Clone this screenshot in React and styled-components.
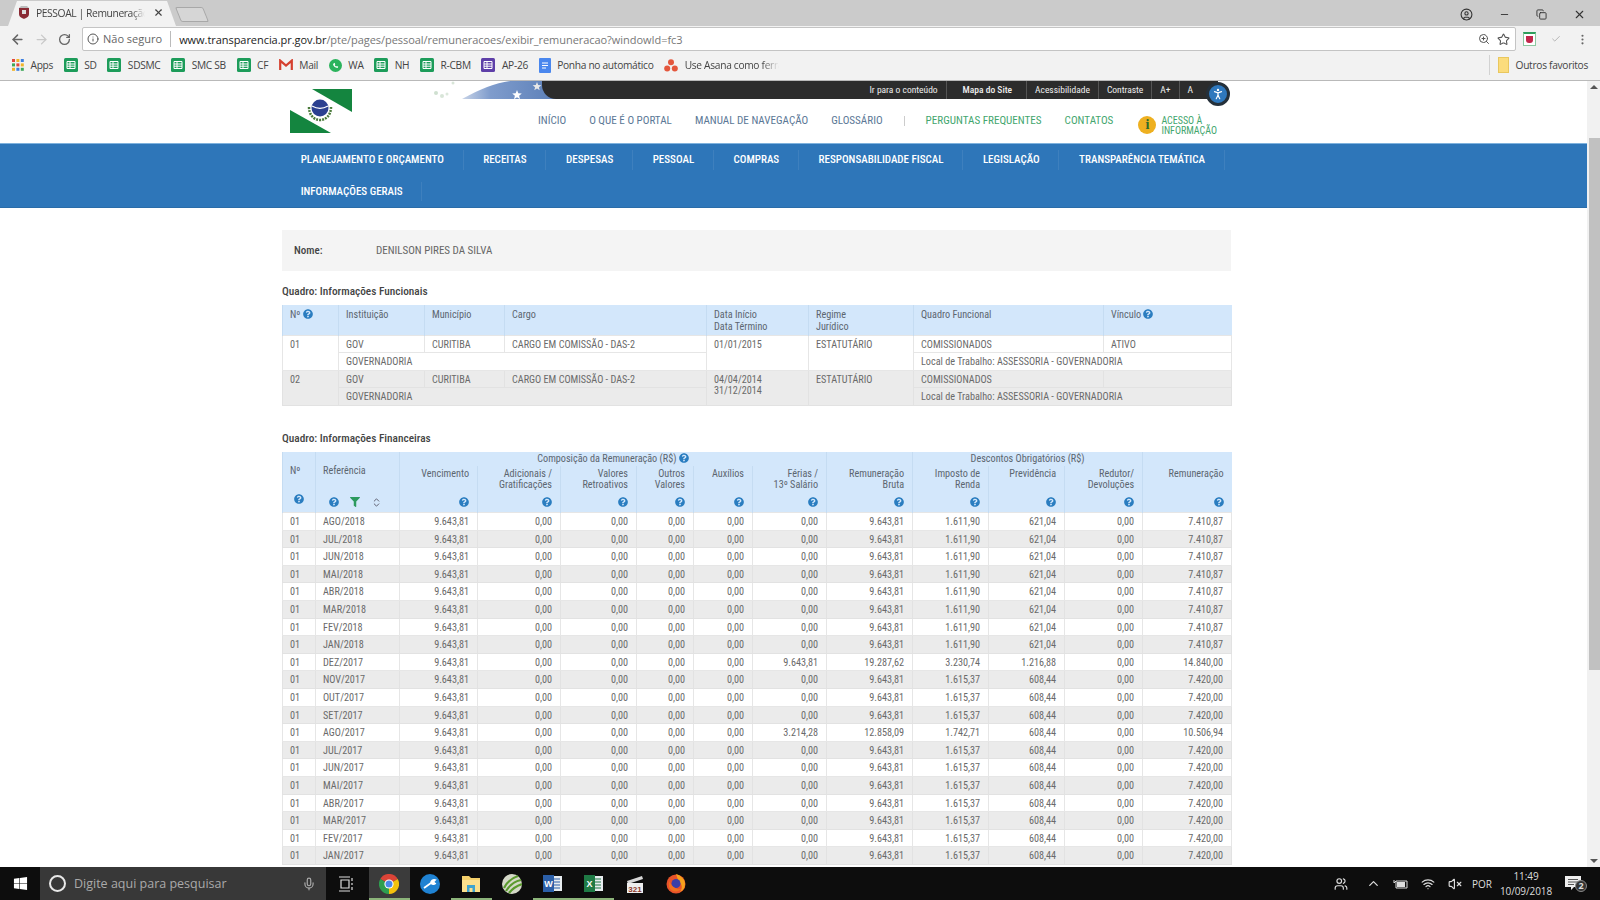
import React from 'react';
import styled, { createGlobalStyle } from 'styled-components';
import {
  ArrowLeft, ArrowRight, RotateCw, Info, ZoomIn, Star, X, Minus, Copy, CircleUser, MoreVertical, Check,
  ChevronsUpDown, ChevronUp, Mic, Users, Wifi, VolumeX, PersonStanding,
} from 'lucide-react';
import { FaQuestionCircle, FaFilter, FaWindows } from 'react-icons/fa';

const narrow = `Roboto, sans-serif`;
const ui = `"Open Sans", "Noto Sans", sans-serif`;
// picks the condensed face of Roboto
const squeeze = `font-stretch: 75%;`;

const GlobalStyle = createGlobalStyle`
  html, body { margin: 0; padding: 0; height: 100%; overflow: hidden; background: #fff; }
  * { box-sizing: border-box; }
`;

const Screen = styled.div`
  width: 1600px;
  height: 900px;
  display: flex;
  flex-direction: column;
  overflow: hidden;
`;

/* browser chrome */
const TabStrip = styled.div`
  height: 26px;
  background: #cbcbcb;
  display: flex;
  align-items: flex-end;
  padding-left: 8px;
  position: relative;
`;

const Tab = styled.div`
  width: 168px;
  height: 25px;
  background: #f2f2f2;
  clip-path: polygon(0 100%, 9px 0, 159px 0, 100% 100%);
  display: flex;
  align-items: center;
  padding: 0 12px 2px 10px;
  font: 10.3px ${ui};
  letter-spacing: -0.4px;
  color: #444;
`;

const TabTitle = styled.span`
  flex: 1;
  overflow: hidden;
  white-space: nowrap;
  margin: 0 8px 0 6px;
  -webkit-mask-image: linear-gradient(90deg, #000 88%, transparent);
  mask-image: linear-gradient(90deg, #000 88%, transparent);
`;

const NewTab = styled.div`
  width: 28px;
  height: 15px;
  margin-bottom: 4px;
  background: #d6d6d6;
  border: 1px solid #a8a8a8;
  border-radius: 2px;
  transform: skewX(22deg);
  margin-left: 2px;
`;

const WindowButtons = styled.div`
  margin-left: auto;
  height: 24px;
  display: flex;
  align-items: center;
  gap: 26px;
  padding-right: 14px;
  color: #333;
`;

const Toolbar = styled.div`
  height: 26px;
  background: #f2f2f2;
  display: flex;
  align-items: center;
  padding-left: 10px;
  color: #666;
`;

const NavIcons = styled.div`
  width: 72px;
  display: flex;
  align-items: center;
  gap: 9px;
`;

const Omnibox = styled.div`
  width: 1434px;
  height: 24px;
  background: #fff;
  border: 1px solid #c4c4c4;
  border-radius: 2px;
  display: flex;
  align-items: center;
  padding: 0 5px 0 4px;
  font: 11px ${ui};
  color: #666;
`;

const Secure = styled.span`
  margin-left: 4px;
  padding-right: 8px;
  border-right: 1px solid #bbb;
  line-height: 16px;
`;

const Url = styled.span`
  margin-left: 8px;
  color: #777;
  letter-spacing: -0.05px;
  b { font-weight: 400; color: #222; }
`;

const OmniIcons = styled.div`
  margin-left: auto;
  display: flex;
  gap: 7px;
  align-items: center;
  color: #555;
`;

const ExtIcons = styled.div`
  flex: 1;
  display: flex;
  align-items: center;
  gap: 15px;
  padding-left: 7px;
`;

const ExtBadge = styled.div`
  width: 13px;
  height: 14px;
  border: 1px solid #8cc9a0;
  border-top: 2px solid #2f9e5c;
  display: flex;
  align-items: center;
  justify-content: center;
  background: #fff;
  &::after { content: ''; width: 7px; height: 7px; border-radius: 0 0 3px 3px; background: #c2264b; }
`;

const Bookmarks = styled.div`
  height: 29px;
  background: #f2f2f2;
  border-bottom: 1px solid #b9b9b9;
  display: flex;
  align-items: center;
  padding: 0 0 2px 12px;
  font: 10.2px ${ui};
  letter-spacing: -0.3px;
  color: #444;
`;

const Bookmark = styled.div`
  display: flex;
  align-items: center;
  gap: 6.5px;
  margin-right: 10.7px;
  white-space: nowrap;
`;

const FadeLabel = styled.span`
  width: 94px;
  overflow: hidden;
  -webkit-mask-image: linear-gradient(90deg, #000 82%, transparent);
  mask-image: linear-gradient(90deg, #000 82%, transparent);
`;

const OtherFavs = styled.div`
  margin-left: auto;
  height: 20px;
  border-left: 1px solid #d2d2d2;
  padding: 0 12px 0 8px;
  display: flex;
  align-items: center;
  gap: 7px;
`;

const Folder = styled.div`
  width: 11px;
  height: 16px;
  background: #fbdc7c;
  border: 1px solid #e9c75e;
`;

/* page */
const Viewport = styled.div`
  flex: 1;
  min-height: 0;
  display: flex;
  background: #fff;
`;

const Page = styled.div`
  width: 1587px;
  overflow: hidden;
`;

const Scrollbar = styled.div`
  width: 13px;
  background: #f1f1f1;
  display: flex;
  flex-direction: column;
  align-items: center;
  justify-content: space-between;
  padding-top: 4px;
  position: relative;
`;

const Thumb = styled.div`
  position: absolute;
  top: 57px;
  left: 2px;
  right: 0;
  height: 532px;
  background: #c1c1c1;
`;

const Arrow = styled.div`
  width: 0;
  height: 0;
  border-left: 4px solid transparent;
  border-right: 4px solid transparent;
  ${p => p.$down ? 'border-top: 4px solid #555; margin-bottom: 4px;' : 'border-bottom: 4px solid #555;'}
`;

const Header = styled.div`
  height: 62px;
  display: flex;
  padding-left: 290px;
`;

const Logo = styled.svg`
  width: 62px;
  height: 45px;
  margin-top: 8px;
  flex: none;
`;

const HeaderRight = styled.div`
  margin-left: 48px;
  width: 828px;
`;

const TopStrip = styled.div`
  height: 18px;
  display: flex;
  position: relative;
`;

const FlagArt = styled.svg`
  width: 157px;
  height: 18px;
  flex: none;
`;

const DarkBar = styled.div`
  flex: 1;
  margin-left: -15px;
  background: #2c2c2c;
  border-radius: 0 0 0 14px;
  display: flex;
  justify-content: flex-end;
  align-items: center;
  height: 18px;
  margin-right: 10px;
  padding-right: 17px;
  font: 9.5px ${narrow};
  ${squeeze}
  color: #eee;
`;

const BarLink = styled.span`
  padding: 0 ${p => (p.$wide ? '14px 0 16px' : '8px')};
  line-height: 18px;
  font-weight: ${p => (p.$wide ? 500 : 400)};
  border-left: 1px solid ${p => (p.$first ? 'transparent' : '#555')};
`;

const A11yButton = styled.div`
  position: absolute;
  right: -2px;
  top: 1px;
  width: 24px;
  height: 24px;
  border-radius: 50%;
  background: #2f78bd;
  border: 3px solid #25303a;
  color: #fff;
  display: flex;
  align-items: center;
  justify-content: center;
`;

const LinkRow = styled.div`
  display: flex;
  align-items: flex-start;
  padding: 14px 0 0 138px;
  gap: 23px;
  font: 11.1px/15px ${narrow};
  ${squeeze}
  text-transform: uppercase;
`;

const TopLink = styled.span`
  color: ${p => (p.$green ? '#43a66e' : '#5b7896')};
  white-space: nowrap;
`;

const LinkDivider = styled.span`
  width: 1px;
  height: 10px;
  margin: 3px -2px 0;
  background: #ccc;
`;

const Acesso = styled.div`
  display: flex;
  gap: 5px;
  margin-left: 2px;
  color: #43a66e;
  font-size: 10px;
  line-height: 10px;
  padding-top: 3px;
`;

const AcessoIcon = styled.div`
  width: 18px;
  height: 18px;
  border-radius: 50%;
  background: #eeb020;
  color: #2c6a2c;
  font: bold 14px/18px "Liberation Serif", serif;
  text-transform: none;
  text-align: center;
`;

const MainNav = styled.div`
  height: 65px;
  background: #2e76b9;
  border-top: 1px solid #7fb2dd;
  border-bottom: 1px solid #2a6ca8;
  padding-left: 281px;
`;

const NavList = styled.div`
  width: 951px;
  display: flex;
  flex-wrap: wrap;
`;

const NavItem = styled.div`
  height: 31.5px;
  padding: 0 19.7px;
  font: 500 11px/31px ${narrow};
  ${squeeze}
  color: #fff;
  text-transform: uppercase;
  white-space: nowrap;
  position: relative;
  &::after {
    content: '';
    position: absolute;
    right: 0;
    top: 6px;
    bottom: 6px;
    width: 1px;
    background: rgba(255, 255, 255, 0.08);
  }
`;

const Content = styled.div`
  width: 949px;
  margin: 22px 0 0 282px;
`;

const NameBox = styled.div`
  height: 41px;
  background: #f4f4f4;
  display: flex;
  align-items: center;
  padding-left: 12px;
  font: 11px ${narrow};
  ${squeeze}
  color: #666;
`;

const NameLabel = styled.span`
  width: 82px;
  font-weight: 500;
  color: #444;
`;

const SectionTitle = styled.div`
  font: 500 11.3px/16px ${narrow};
  ${squeeze}
  color: #444;
  margin: ${p => p.$top}px 0 5px;
`;

const Table = styled.table`
  width: 949px;
  table-layout: fixed;
  border-collapse: collapse;
  font: 10.2px/11.6px ${narrow};
  ${squeeze}
  color: #6a6a6a;
`;

const Th = styled.th`
  background: #d3e7fb;
  font-weight: normal;
  color: #5c6670;
  vertical-align: top;
  text-align: ${p => p.$align || 'left'};
  padding: ${p => p.$pad || '4px 7px 0'};
  border-left: 1px solid #c5dcf2;
  white-space: nowrap;
`;

const Td = styled.td`
  vertical-align: top;
  padding: 3px 8px 0 7px;
  background: ${p => (p.$alt ? '#ebebeb' : '#fff')};
  border: 1px solid ${p => (p.$alt ? '#e2e2e2' : '#e6e6e6')};
  text-align: ${p => p.$align || 'left'};
  white-space: nowrap;
  overflow: hidden;
`;

const Help = styled(FaQuestionCircle)`
  color: #2a7dc0;
  width: 10px;
  height: 10px;
  vertical-align: -1px;
`;

const Tools = styled.div`
  display: flex;
  align-items: center;
  gap: 11px;
  padding-left: 13px;
`;

/* task bar */
const Taskbar = styled.div`
  height: 33px;
  background: #0d0d0d;
  display: flex;
  align-items: center;
  color: #ddd;
`;

const StartButton = styled.div`
  width: 40px;
  display: flex;
  justify-content: center;
`;

const SearchBox = styled.div`
  width: 286px;
  height: 33px;
  background: #383838;
  display: flex;
  align-items: center;
  padding: 0 10px 0 9px;
  font: 12.5px ${ui};
  color: #aaa;
`;

const Cortana = styled.div`
  width: 17px;
  height: 17px;
  border-radius: 50%;
  border: 2px solid #e8e8e8;
  margin-right: 8px;
`;

const TaskApps = styled.div`
  display: flex;
  height: 33px;
`;

const TaskApp = styled.div`
  width: ${p => p.$w || 40.9}px;
  margin-left: ${p => (p.$active ? 3 : 0)}px;
  display: flex;
  align-items: center;
  justify-content: center;
  background: ${p => (p.$active ? '#3b3b3b' : 'transparent')};
  box-shadow: ${p => (p.$open ? 'inset 0 -2px 0 #8cb47a' : 'none')};
`;

const Tray = styled.div`
  margin-left: auto;
  display: flex;
  align-items: center;
  height: 33px;
  font: 10px ${ui};
  color: #ddd;
`;

const TrayIcon = styled.div`
  width: 27px;
  margin-right: ${p => p.$gap || 0}px;
  display: flex;
  justify-content: center;
`;

const Lang = styled.span`
  width: 28px;
  text-align: center;
`;

const Clock = styled.div`
  width: 60px;
  text-align: center;
  line-height: 15px;
  letter-spacing: -0.1px;
`;

const Notify = styled.div`
  width: 44px;
  padding-left: 9px;
  display: flex;
  position: relative;
`;

const NotifyCount = styled.div`
  position: absolute;
  left: 19px;
  top: 4px;
  width: 12px;
  height: 12px;
  border-radius: 50%;
  background: #333;
  border: 1px solid #888;
  font: bold 9px/10px ${ui};
  text-align: center;
  color: #ddd;
`;

const SheetIcon = ({ color = '#1d9c5a' }) => (
  <svg width="14" height="14" viewBox="0 0 14 14">
    <rect width="14" height="14" rx="1.5" fill={color} />
    <path d="M3 3.5h8v7H3zM3 6h8M3 8.2h8M6 3.5v7" fill="none" stroke="#fff" strokeWidth="1" />
  </svg>
);

const AppsIcon = () => {
  const colors = ['#e3483b', '#f0b428', '#3c7fe0', '#3fa85a', '#e3483b', '#f0b428', '#f0b428', '#3c7fe0', '#3fa85a'];
  return (
    <svg width="12" height="12" viewBox="0 0 12 12">
      {colors.map((c, i) => (
        <rect key={i} x={(i % 3) * 4.4} y={Math.floor(i / 3) * 4.4} width="3" height="3" fill={c} />
      ))}
    </svg>
  );
};

const MailIcon = () => (
  <svg width="14" height="12" viewBox="0 0 14 12">
    <path d="M1.2 11V1.6L7 6.6l5.8-5V11" fill="none" stroke="#d5402f" strokeWidth="2.2" />
  </svg>
);

const WaIcon = () => (
  <svg width="13" height="13" viewBox="0 0 13 13">
    <circle cx="6.5" cy="6.5" r="6.5" fill="#2bb35c" />
    <path d="M4 5c.3 2 2 3.7 4.5 4l.8-1.3-1.4-.8-.7.6c-.7-.3-1.2-.9-1.5-1.6l.6-.7-.8-1.4z" fill="#fff" />
  </svg>
);

const DocIcon = () => (
  <svg width="12" height="15" viewBox="0 0 12 15">
    <rect width="12" height="15" rx="1" fill="#4a87ee" />
    <path d="M3 5h6M3 7.5h6M3 10h4" stroke="#fff" strokeWidth="1" />
  </svg>
);

const AsanaIcon = () => (
  <svg width="14" height="13" viewBox="0 0 14 13">
    <circle cx="7" cy="3.2" r="3" fill="#e4573d" />
    <circle cx="3.2" cy="9.6" r="3" fill="#e4573d" />
    <circle cx="10.8" cy="9.6" r="3" fill="#e4573d" />
  </svg>
);

const Crest = () => (
  <svg width="12" height="13" viewBox="0 0 12 13">
    <path d="M1 2h10v6c0 3-3 4-5 5-2-1-5-2-5-5z" fill="#8a2a34" />
    <path d="M1 2l2-2h6l2 2z" fill="#bbb" />
    <rect x="4" y="4" width="4" height="4" fill="#ddd" />
  </svg>
);

const ChromeIcon = () => (
  <svg width="20" height="20" viewBox="0 0 20 20">
    <path d="M10 10L1.3 5A10 10 0 0 1 18.7 5z" fill="#dc4437" />
    <path d="M10 10L18.7 5A10 10 0 0 1 10 20z" fill="#f4c20d" />
    <path d="M10 10L10 20A10 10 0 0 1 1.3 5z" fill="#2f9e50" />
    <circle cx="10" cy="10" r="4.6" fill="#fff" />
    <circle cx="10" cy="10" r="3.5" fill="#4a89e8" />
  </svg>
);

const WrenchIcon = () => (
  <svg width="20" height="20" viewBox="0 0 20 20">
    <circle cx="10" cy="10" r="10" fill="#1f82d2" />
    <path d="M4 14l7-5M11 9c0-2 2-3.500 4-3l-2 2 2 1.500c-1 1-3 .5-4-.5z" stroke="#fff" strokeWidth="1.800" fill="#fff" />
  </svg>
);

const ExplorerIcon = () => (
  <svg width="20" height="19" viewBox="0 0 20 19">
    <path d="M1 2h7l2 2h9v14H1z" fill="#f4d06b" />
    <path d="M1 6h18v12H1z" fill="#fbe08e" />
    <rect x="6" y="11" width="8" height="7" fill="#3fa4d0" />
    <rect x="8.500" y="14" width="3" height="4" fill="#fbe08e" />
  </svg>
);

const SwirlIcon = () => (
  <svg width="20" height="20" viewBox="0 0 20 20">
    <circle cx="10" cy="10" r="10" fill="#d5d9c8" />
    <path d="M2 14C5 8 10 4 16 2M4 17C8 11 13 7 19 6M7 19C10 15 14 12 20 10" stroke="#5a9a2d" strokeWidth="2.200" fill="none" />
  </svg>
);

const OfficeIcon = ({ color, letter }) => (
  <svg width="20" height="19" viewBox="0 0 20 19">
    <rect x="9" y="2" width="10" height="15" fill="#e8edf0" />
    <path d="M11 5h6M11 8h6M11 11h6M11 14h6" stroke={color} strokeWidth="1.200" />
    <rect x="0" y="1" width="11" height="17" fill={color} />
    <text x="5.500" y="13" fontSize="9" fontWeight="bold" textAnchor="middle" fill="#fff" fontFamily="Liberation Sans">{letter}</text>
  </svg>
);

const ClapperIcon = () => (
  <svg width="20" height="20" viewBox="0 0 20 20">
    <path d="M2 7L17 2l1 3L3 10z" fill="#d8d8d8" />
    <rect x="2" y="9" width="16" height="10" fill="#eee" />
    <text x="10" y="17.500" fontSize="8" fontWeight="bold" textAnchor="middle" fill="#8d3a2a" fontFamily="Liberation Sans">321</text>
  </svg>
);

const FirefoxIcon = () => (
  <svg width="20" height="21" viewBox="0 0 20 21">
    <circle cx="10" cy="11" r="9.500" fill="#e8532a" />
    <path d="M10 1c6 2 9 6 9 10a9 9 0 0 1-5 8c3-4 2-8-1-10-1-2-2-5-3-8z" fill="#f7a11c" />
    <circle cx="10" cy="10.500" r="4.500" fill="#3a3fa8" />
    <path d="M3 8c2 4 6 9 12 8-3 4-10 3-12-2z" fill="#f0711f" />
  </svg>
);

const Sort = styled(ChevronsUpDown)`
  width: 11px;
  height: 11px;
  color: #556;
`;

const Filter = styled(FaFilter)`
  width: 10px;
  height: 10px;
  color: #2c9a5e;
`;

const navItems = ['Planejamento e Orçamento', 'Receitas', 'Despesas', 'Pessoal', 'Compras', 'Responsabilidade Fiscal', 'Legislação', 'Transparência Temática', 'Informações Gerais'];

const finCols = [33, 84, 78, 83, 76, 57, 59, 74, 86, 76, 76, 78, 89];
const funCols = [56, 86, 80, 202, 102, 105, 190, 128];

const normal18 = ['0,00', '9.643,81', '1.611,90', '621,04', '0,00', '7.410,87'];
const normal17 = ['0,00', '9.643,81', '1.615,37', '608,44', '0,00', '7.420,00'];

const rows = [
  ...['AGO/2018', 'JUL/2018', 'JUN/2018', 'MAI/2018', 'ABR/2018', 'MAR/2018', 'FEV/2018', 'JAN/2018'].map(r => [r, ...normal18]),
  ['DEZ/2017', '9.643,81', '19.287,62', '3.230,74', '1.216,88', '0,00', '14.840,00'],
  ...['NOV/2017', 'OUT/2017', 'SET/2017'].map(r => [r, ...normal17]),
  ['AGO/2017', '3.214,28', '12.858,09', '1.742,71', '608,44', '0,00', '10.506,94'],
  ...['JUL/2017', 'JUN/2017', 'MAI/2017', 'ABR/2017', 'MAR/2017', 'FEV/2017', 'JAN/2017'].map(r => [r, ...normal17]),
];

const FunctionalTable = () => (
  <Table>
    <colgroup>{funCols.map((w, i) => <col key={i} width={w} />)}</colgroup>
    <thead>
      <tr style={{ height: 30 }}>
        <Th>Nº <Help /></Th>
        <Th>Instituição</Th>
        <Th>Município</Th>
        <Th>Cargo</Th>
        <Th>Data Início<br />Data Término</Th>
        <Th>Regime<br />Jurídico</Th>
        <Th>Quadro Funcional</Th>
        <Th>Vínculo <Help /></Th>
      </tr>
    </thead>
    <tbody>
      {[
        { n: '01', date: <>01/01/2015</>, vinculo: 'ATIVO' },
        { n: '02', date: <>04/04/2014<br />31/12/2014</>, vinculo: '', alt: true },
      ].map(r => (
        <React.Fragment key={r.n}>
          <tr style={{ height: 17.5 }}>
            <Td $alt={r.alt} rowSpan={2}>{r.n}</Td>
            <Td $alt={r.alt}>GOV</Td>
            <Td $alt={r.alt}>CURITIBA</Td>
            <Td $alt={r.alt}>CARGO EM COMISSÃO - DAS-2</Td>
            <Td $alt={r.alt} rowSpan={2}>{r.date}</Td>
            <Td $alt={r.alt} rowSpan={2}>ESTATUTÁRIO</Td>
            <Td $alt={r.alt}>COMISSIONADOS</Td>
            <Td $alt={r.alt}>{r.vinculo}</Td>
          </tr>
          <tr style={{ height: 17.5 }}>
            <Td $alt={r.alt} colSpan={3}>GOVERNADORIA</Td>
            <Td $alt={r.alt} colSpan={2}>Local de Trabalho: ASSESSORIA - GOVERNADORIA</Td>
          </tr>
        </React.Fragment>
      ))}
    </tbody>
  </Table>
);

const labels = [
  ['Vencimento'], ['Adicionais /', 'Gratificações'], ['Valores', 'Retroativos'], ['Outros', 'Valores'], ['Auxílios'],
  ['Férias /', '13º Salário'], ['Remuneração', 'Bruta'], ['Imposto de', 'Renda'], ['Previdência'], ['Redutor/', 'Devoluções'], ['Remuneração'],
];

const FinancialTable = () => (
  <Table>
    <colgroup>{finCols.map((w, i) => <col key={i} width={w} />)}</colgroup>
    <thead>
      <tr style={{ height: 14 }}>
        <Th rowSpan={2} $pad="13px 7px 0">Nº</Th>
        <Th rowSpan={2} $pad="13px 7px 0">Referência</Th>
        <Th colSpan={6} $align="center" $pad="1px 8px 0">Composição da Remuneração (R$) <Help /></Th>
        <Th />
        <Th colSpan={3} $align="center" $pad="1px 8px 0">Descontos Obrigatórios (R$)</Th>
        <Th />
      </tr>
      <tr style={{ height: 27 }}>
        {labels.map(l => (
          <Th key={l.join()} $align="right" $pad="2px 8px 0">{l[0]}{l[1] && <><br />{l[1]}</>}</Th>
        ))}
      </tr>
      <tr style={{ height: 20 }}>
        <Th $pad="1px 7px 0 11px"><Help /></Th>
        <Th $pad="4px 0 0"><Tools><Help /><Filter /><Sort /></Tools></Th>
        {labels.map(l => <Th key={l.join()} $align="right" $pad="4px 8px 0"><Help /></Th>)}
      </tr>
    </thead>
    <tbody>
      {rows.map((r, i) => (
        <tr key={i} style={{ height: 17.6 }}>
          <Td $alt={i % 2 === 1}>01</Td>
          <Td $alt={i % 2 === 1}>{r[0]}</Td>
          <Td $alt={i % 2 === 1} $align="right">9.643,81</Td>
          <Td $alt={i % 2 === 1} $align="right">0,00</Td>
          <Td $alt={i % 2 === 1} $align="right">0,00</Td>
          <Td $alt={i % 2 === 1} $align="right">0,00</Td>
          <Td $alt={i % 2 === 1} $align="right">0,00</Td>
          {r.slice(1).map((v, j) => <Td key={j} $alt={i % 2 === 1} $align="right">{v}</Td>)}
        </tr>
      ))}
    </tbody>
  </Table>
);

export default function App() {
  return (
    <Screen>
      <GlobalStyle />
      <TabStrip>
        <Tab>
          <Crest />
          <TabTitle>PESSOAL | Remuneração</TabTitle>
          <X size={11} strokeWidth={2.5} />
        </Tab>
        <NewTab />
        <WindowButtons>
          <CircleUser size={13} />
          <Minus size={11} />
          <Copy size={11} />
          <X size={13} />
        </WindowButtons>
      </TabStrip>
      <Toolbar>
        <NavIcons>
          <ArrowLeft size={15} strokeWidth={2.4} />
          <ArrowRight size={15} color="#c8c8c8" />
          <RotateCw size={13} strokeWidth={2.4} />
        </NavIcons>
        <Omnibox>
          <Info size={12} color="#555" />
          <Secure>Não seguro</Secure>
          <Url><b>www.transparencia.pr.gov.br</b>/pte/pages/pessoal/remuneracoes/exibir_remuneracao?windowId=fc3</Url>
          <OmniIcons>
            <ZoomIn size={12} />
            <Star size={13} />
          </OmniIcons>
        </Omnibox>
        <ExtIcons>
          <ExtBadge />
          <Check size={10} color="#aaa" />
          <MoreVertical size={13} />
        </ExtIcons>
      </Toolbar>
      <Bookmarks>
        <Bookmark><AppsIcon />Apps</Bookmark>
        {['SD', 'SDSMC', 'SMC SB', 'CF'].map(b => <Bookmark key={b}><SheetIcon />{b}</Bookmark>)}
        <Bookmark><MailIcon />Mail</Bookmark>
        <Bookmark><WaIcon />WA</Bookmark>
        <Bookmark><SheetIcon />NH</Bookmark>
        <Bookmark><SheetIcon />R-CBM</Bookmark>
        <Bookmark><SheetIcon color="#5e3fa8" />AP-26</Bookmark>
        <Bookmark><DocIcon />Ponha no automático</Bookmark>
        <Bookmark><AsanaIcon /><FadeLabel>Use Asana como ferramenta</FadeLabel></Bookmark>
        <OtherFavs><Folder />Outros favoritos</OtherFavs>
      </Bookmarks>

      <Viewport>
        <Page>
          <Header>
            <Logo viewBox="0 0 62 45">
              <path d="M22 0H62V23z" fill="#14853f" />
              <path d="M0 21L41 44H0z" fill="#14853f" />
              <circle cx="30" cy="19" r="8.500" fill="#2b3f90" />
              <path d="M19 18c0 8 5 13 11 13s11-5 11-13" fill="none" stroke="#4a7a3a" strokeWidth="2.500" strokeDasharray="2 1" />
              <path d="M22 17c5 3 11 3 16 0" stroke="#fff" strokeWidth="1.200" fill="none" />
            </Logo>
            <HeaderRight>
              <TopStrip>
                <FlagArt viewBox="0 0 157 18">
                  <defs>
                    <linearGradient id="flagFade" x1="0" x2="1" y1="0" y2="0">
                      <stop offset="0" stopColor="#c8d4e8" />
                      <stop offset="0.3" stopColor="#7f9ccc" />
                      <stop offset="1" stopColor="#5b7fb8" />
                    </linearGradient>
                  </defs>
                  <path d="M62 18C80 8 95 2 110 0H157V18z" fill="url(#flagFade)" />
                  <circle cx="36" cy="12" r="2" fill="#cfe0d0" />
                  <circle cx="42" cy="15" r="2" fill="#d8e5d8" />
                  <circle cx="47" cy="13" r="1.500" fill="#dce8dc" />
                  <circle cx="53" cy="2" r="1.500" fill="#d8e5d8" />
                  <path d="M117 9l1.300 3.300 3.500.2-2.700 2.300.9 3.400-3-1.900-3 1.900.9-3.400-2.700-2.300 3.500-.2z" fill="#fff" />
                  <path d="M137 1l1.200 3 3.200.2-2.500 2 .8 3.100-2.700-1.700-2.700 1.700.8-3.100-2.500-2 3.200-.2z" fill="#e8e8e8" />
                </FlagArt>
                <DarkBar>
                  <BarLink $first>Ir para o conteúdo</BarLink>
                  <BarLink $wide>Mapa do Site</BarLink>
                  <BarLink>Acessibilidade</BarLink>
                  <BarLink>Contraste</BarLink>
                  <BarLink>A+</BarLink>
                  <BarLink>A</BarLink>
                </DarkBar>
                <A11yButton><PersonStanding size={14} /></A11yButton>
              </TopStrip>
              <LinkRow>
                <TopLink>Início</TopLink>
                <TopLink>O que é o Portal</TopLink>
                <TopLink>Manual de Navegação</TopLink>
                <TopLink>Glossário</TopLink>
                <LinkDivider />
                <TopLink $green>Perguntas Frequentes</TopLink>
                <TopLink $green>Contatos</TopLink>
                <Acesso>
                  <AcessoIcon>i</AcessoIcon>
                  <span>Acesso à<br />Informação</span>
                </Acesso>
              </LinkRow>
            </HeaderRight>
          </Header>
          <MainNav>
            <NavList>
              {navItems.map(n => <NavItem key={n}>{n}</NavItem>)}
            </NavList>
          </MainNav>
          <Content>
            <NameBox><NameLabel>Nome:</NameLabel>DENILSON PIRES DA SILVA</NameBox>
            <SectionTitle $top={13}>Quadro: Informações Funcionais</SectionTitle>
            <FunctionalTable />
            <SectionTitle $top={25}>Quadro: Informações Financeiras</SectionTitle>
            <FinancialTable />
          </Content>
        </Page>
        <Scrollbar>
          <Arrow />
          <Thumb />
          <Arrow $down />
        </Scrollbar>
      </Viewport>

      <Taskbar>
        <StartButton><FaWindows size={15} color="#fff" /></StartButton>
        <SearchBox>
          <Cortana />
          Digite aqui para pesquisar
          <Mic size={14} style={{ marginLeft: 'auto' }} />
        </SearchBox>
        <TaskApps>
          <TaskApp $w={40}>
            <svg width="16" height="16" viewBox="0 0 16 16"><path d="M1 1h11M1 15h11M3 4h8v8H3zM14 2v3M14 7v2M14 11v3" fill="none" stroke="#ddd" strokeWidth="1.200" /></svg>
          </TaskApp>
          <TaskApp $active $open><ChromeIcon /></TaskApp>
          <TaskApp><WrenchIcon /></TaskApp>
          <TaskApp $open><ExplorerIcon /></TaskApp>
          <TaskApp><SwirlIcon /></TaskApp>
          <TaskApp $open><OfficeIcon color="#2b5fa8" letter="W" /></TaskApp>
          <TaskApp $open><OfficeIcon color="#1f7a45" letter="X" /></TaskApp>
          <TaskApp><ClapperIcon /></TaskApp>
          <TaskApp><FirefoxIcon /></TaskApp>
        </TaskApps>
        <Tray>
          <TrayIcon $gap={6}><Users size={14} /></TrayIcon>
          <TrayIcon><ChevronUp size={15} /></TrayIcon>
          <TrayIcon>
            <svg width="15" height="12" viewBox="0 0 15 12"><path d="M3 3h11v7H3zM1 5V2M3 3L1 5" fill="none" stroke="#ddd" /><rect x="4" y="4" width="8" height="5" fill="#ddd" /></svg>
          </TrayIcon>
          <TrayIcon><Wifi size={14} /></TrayIcon>
          <TrayIcon><VolumeX size={14} /></TrayIcon>
          <Lang>POR</Lang>
          <Clock>11:49<br />10/09/2018</Clock>
          <Notify>
            <svg width="16" height="15" viewBox="0 0 16 15"><path d="M0 0h16v11H9l-3 3v-3H0z" fill="#eee" /><path d="M3 3.500h10M3 6h10M3 8.500h6" stroke="#555" /></svg>
            <NotifyCount>2</NotifyCount>
          </Notify>
        </Tray>
      </Taskbar>
    </Screen>
  );
}
